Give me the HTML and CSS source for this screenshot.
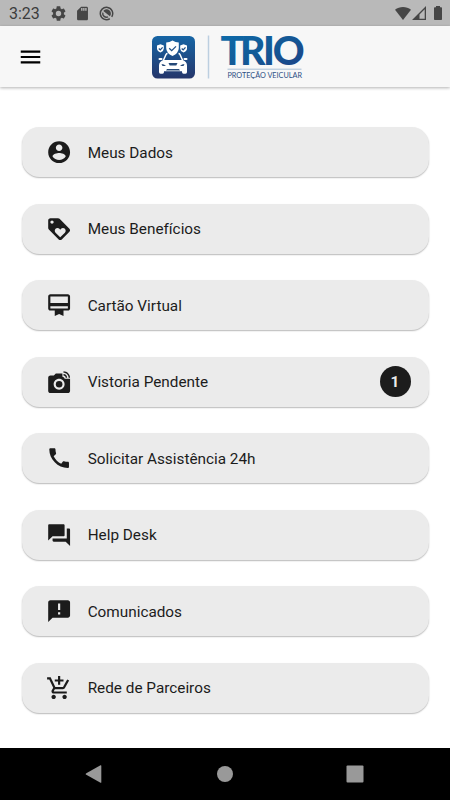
FILE: index.html
```html
<!DOCTYPE html>
<html lang="pt-BR">
<head>
  <meta charset="UTF-8" />
  <meta name="viewport" content="width=device-width, initial-scale=1.0" />
  <title>Trio Proteção Veicular</title>
  <link rel="stylesheet" href="styles.css">
</head>
<body>
  <div id="app">
    <div class="status-bar">
      <span class="clock">3:23</span>
      <svg class="status-icon gear" viewBox="2 2 20 20"><path d="M19.14 12.94c.04-.3.06-.61.06-.94 0-.32-.02-.64-.07-.94l2.03-1.58a.49.49 0 0 0 .12-.61l-1.92-3.32a.488.488 0 0 0-.59-.22l-2.39.96c-.5-.38-1.03-.7-1.62-.94l-.36-2.54a.484.484 0 0 0-.48-.41h-3.84c-.24 0-.43.17-.47.41l-.36 2.54c-.59.24-1.13.57-1.62.94l-2.39-.96c-.22-.08-.47 0-.59.22L2.74 8.87c-.12.21-.08.47.12.61l2.03 1.58c-.05.3-.09.63-.09.94s.02.64.07.94l-2.03 1.58a.49.49 0 0 0-.12.61l1.92 3.32c.12.22.37.29.59.22l2.39-.96c.5.38 1.03.7 1.62.94l.36 2.54c.05.24.24.41.48.41h3.84c.24 0 .44-.17.47-.41l.36-2.54c.59-.24 1.13-.56 1.62-.94l2.39.96c.22.08.47 0 .59-.22l1.92-3.32c.12-.22.07-.47-.12-.61l-2.01-1.58zM12 15.600A3.600 3.600 0 1 1 12 8.400a3.600 3.600 0 0 1 0 7.200z"/></svg>
      <svg class="status-icon sd" viewBox="1 1 22 22"><path d="M18 2h-8L4.020 8 4 20c0 1.100.9 2 2 2h12c1.100 0 2-.9 2-2V4c0-1.100-.9-2-2-2zm-6 6h-2V4h2v4zm3 0h-2V4h2v4zm3 0h-2V4h2v4z"/></svg>
      <svg class="status-icon sync" viewBox="0 0 16 16">
        <path d="M11.500 13.600A6.600 6.600 0 1 1 13.600 11.500" fill="none" stroke="#464646" stroke-width="1.600"/>
        <path d="M4.600 5.200A4.400 4.400 0 0 1 11.700 10.900z"/>
        <path d="M4.100 7a4 4 0 0 0 5.600 4.600" fill="none" stroke="#464646" stroke-width="1.500"/>
      </svg>
      <div class="status-right">
        <svg class="wifi" viewBox="0 0 16 13"><path d="M0 2.800C4.500-.9 11.500-.9 16 2.800L8 13z"/></svg>
        <svg class="signal" viewBox="0 0 14 14"><path d="M14 0v14H0zM12.700 3.200L7.500 8.400v4.400h5.200z" fill-rule="evenodd"/></svg>
        <svg class="battery" viewBox="0 0 8 14"><path d="M2 0h4v1.300h1.200q.8 0 .8.800v11.100q0 .8-.8.800H.8q-.8 0-.8-.8V2.100q0-.8.800-.8H2z"/></svg>
      </div>
    </div>

    <header class="toolbar">
      <button class="menu-button" aria-label="Menu">
        <svg viewBox="0 0 24 24"><path d="M3 18h18v-2H3v2zm0-5h18v-2H3v2zm0-7v2h18V6H3z"/></svg>
      </button>
      <svg class="logo" viewBox="0 0 156 48">
        <defs>
          <linearGradient id="badgeFill" x1="0" y1="0" x2="0" y2="1">
            <stop offset="0" stop-color="#1665a5"/>
            <stop offset="1" stop-color="#25366b"/>
          </linearGradient>
          <linearGradient id="wordFill" x1="0" y1="0" x2="1" y2="1">
            <stop offset="0" stop-color="#0b6fae"/>
            <stop offset=".5" stop-color="#135a97"/>
            <stop offset="1" stop-color="#1d4085"/>
          </linearGradient>
        </defs>
        <rect x="2" y="3" width="43" height="42.500" rx="5.500" fill="url(#badgeFill)"/>
        <!-- car and shields -->
        <g fill="#fff">
          <path d="M7 12.500l3.500-1.200 3.300 1.200v3.300q0 2.300-3.300 3.800Q7 18.100 7 15.800z"/>
          <path d="M30.200 12.500l3.300-1.200 3.500 1.200v3.300q0 2.300-3.500 3.800-3.300-1.500-3.300-3.800z"/>
          <path d="M22.500 7.500q3 2 6.300 2v5.500q0 5-6.300 8-6.300-3-6.300-8V9.500q3.300 0 6.300-2z"/>
          <path d="M13.300 27h19.400q4.300 1.800 4.300 5.500V39q0 1.700-1.500 1.700h-2q-1.500 0-1.500-1.700v-.8H14v.8q0 1.700-1.500 1.700h-2Q9 40.700 9 39v-6.500q0-3.700 4.300-5.500z"/>
          <rect x="8.500" y="25" width="4" height="2" rx="1"/>
          <rect x="33.500" y="25" width="4" height="2" rx="1"/>
        </g>
        <path d="M13.300 27.500l2.700-6q.5-1 1.500-1M32.700 27.500l-2.700-6q-.5-1-1.500-1" fill="none" stroke="#fff" stroke-width="1.500"/>
        <path d="M19.200 15.200l2.500 2.500 4.300-4.300M8.800 15.500l1.500 1.400 2.300-2.500M31.700 15.500l1.500 1.400 2.300-2.500" fill="none" stroke="#205086" stroke-width="1.300"/>
        <path d="M11.500 31q2.700 0 4.500 2h-3.500zM34.500 31q-2.700 0-4.500 2h3.500zM18.500 30h9l-1.200 2.500h-6.600zM17 36h12l1 1.500H16z" fill="#244878"/>
        <path d="M58.500 2.500v43" stroke="#bccfe0" stroke-width="1.500"/>
        <text class="logo-name" x="70.500 90 113 122.800" y="31.800" fill="url(#wordFill)">TRIO</text>
        <path d="M77.500 36.200h74" stroke="#a9bfd5" stroke-width="1"/>
        <text class="logo-tagline" x="77.500" y="44.500" textLength="74.500" lengthAdjust="spacingAndGlyphs">PROTEÇÃO VEICULAR</text>
      </svg>
    </header>

    <main class="menu">
      <a class="menu-item">
        <svg viewBox="0 0 24 24"><path d="M12 2C6.480 2 2 6.480 2 12s4.480 10 10 10 10-4.480 10-10S17.520 2 12 2zm0 3c1.660 0 3 1.340 3 3s-1.340 3-3 3-3-1.340-3-3 1.340-3 3-3zm0 14.200c-2.500 0-4.710-1.280-6-3.220.03-1.990 4-3.080 6-3.080 1.990 0 5.970 1.090 6 3.080-1.290 1.940-3.500 3.220-6 3.220z"/></svg>
        <span>Meus Dados</span>
      </a>
      <a class="menu-item">
        <svg viewBox="0 0 24 24"><path d="M21.410 11.580l-9-9C12.050 2.220 11.550 2 11 2H4c-1.100 0-2 .9-2 2v7c0 .55.22 1.050.59 1.420l9 9c.36.36.86.58 1.410.58s1.050-.22 1.410-.59l7-7c.37-.36.59-.86.59-1.410s-.23-1.060-.59-1.420zM5.500 7C4.670 7 4 6.330 4 5.500S4.670 4 5.500 4 7 4.670 7 5.500 6.330 7 5.500 7zm11.770 8.270L13 19.540l-4.270-4.270C8.280 14.810 8 14.190 8 13.500c0-1.380 1.120-2.500 2.500-2.500.69 0 1.320.28 1.770.74l.73.72.73-.73c.45-.45 1.080-.73 1.770-.73 1.380 0 2.500 1.120 2.500 2.500 0 .69-.28 1.320-.73 1.770z"/></svg>
        <span>Meus Benefícios</span>
      </a>
      <a class="menu-item">
        <svg viewBox="0 0 24 24"><path d="M20 2H4c-1.110 0-2 .89-2 2v11c0 1.110.89 2 2 2h4v5l4-2 4 2v-5h4c1.110 0 2-.89 2-2V4c0-1.110-.89-2-2-2zm0 13H4v-2h16v2zm0-5H4V4h16v6z"/></svg>
        <span>Cartão Virtual</span>
      </a>
      <a class="menu-item">
        <svg viewBox="0 0 24 24">
          <circle cx="12" cy="14" r="3"/>
          <path d="M16 3.330c2.580 0 4.670 2.090 4.670 4.670H22c0-3.310-2.690-6-6-6v1.330M16 6c1.110 0 2 .89 2 2h1.330c0-1.840-1.490-3.330-3.330-3.330V6"/>
          <path d="M17 9c0-1.110-.89-2-2-2V4H9L7.170 6H4c-1.100 0-2 .9-2 2v12c0 1.100.9 2 2 2h16c1.100 0 2-.9 2-2V9h-5zm-5 10c-2.760 0-5-2.240-5-5s2.240-5 5-5 5 2.240 5 5-2.240 5-5 5z"/>
        </svg>
        <span>Vistoria Pendente</span>
        <b class="badge">1</b>
      </a>
      <a class="menu-item">
        <svg viewBox="0 0 24 24"><path d="M20.010 15.380c-1.230 0-2.420-.2-3.530-.56-.35-.12-.74-.03-1.010.24l-1.570 1.970c-2.830-1.350-5.480-3.900-6.890-6.830l1.950-1.660c.27-.28.35-.67.24-1.020-.37-1.110-.56-2.300-.56-3.530 0-.54-.45-.99-.99-.99H4.190C3.650 3 3 3.240 3 3.990 3 13.280 10.730 21 20.010 21c.71 0 .99-.63.99-1.180v-3.450c0-.54-.45-.99-.99-.99z"/></svg>
        <span>Solicitar Assistência 24h</span>
      </a>
      <a class="menu-item">
        <svg viewBox="0 0 24 24"><path d="M21 6h-2v9H6v2c0 .55.45 1 1 1h11l4 4V7c0-.55-.45-1-1-1zm-4 6V3c0-.55-.45-1-1-1H3c-.55 0-1 .45-1 1v14l4-4h10c.55 0 1-.45 1-1z"/></svg>
        <span>Help Desk</span>
      </a>
      <a class="menu-item">
        <svg viewBox="0 0 24 24"><path d="M20 2H4c-1.100 0-1.990.9-1.990 2L2 22l4-4h14c1.100 0 2-.9 2-2V4c0-1.100-.9-2-2-2zm-7 9h-2V5h2v6zm0 4h-2v-2h2v2z"/></svg>
        <span>Comunicados</span>
      </a>
      <a class="menu-item">
        <svg viewBox="0 0 24 24"><path d="M11 9h2V6h3V4h-3V1h-2v3H8v2h3v3zm-4 9c-1.100 0-1.990.9-1.990 2S5.900 22 7 22s2-.9 2-2-.9-2-2-2zm10 0c-1.100 0-1.990.9-1.990 2s.89 2 1.990 2 2-.9 2-2-.9-2-2-2zm-9.830-3.250l.03-.12.9-1.630h7.450c.75 0 1.410-.41 1.750-1.030l3.860-7.010L19.420 4h-.01l-1.100 2-2.760 5H8.530l-.13-.27L6.160 6l-.95-2-.94-2H1v2h2l3.600 7.590-1.350 2.450c-.16.28-.25.61-.25.96 0 1.100.9 2 2 2h12v-2H7.420c-.13 0-.25-.11-.25-.25z"/></svg>
        <span>Rede de Parceiros</span>
      </a>
    </main>

    <nav class="nav-bar">
      <svg viewBox="0 0 18 18"><path d="M1.300 8.200L15.500.300q.8-.4.800.5v16.400q0 .9-.8.500L1.300 9.800q-1.300-.8 0-1.600z"/></svg>
      <svg viewBox="0 0 18 18"><circle cx="9" cy="9" r="8"/></svg>
      <svg viewBox="0 0 18 18"><rect x=".5" y=".5" width="17" height="17" rx="1"/></svg>
    </nav>
  </div>
</body>
</html>
```
FILE: styles.css
```css
* {
  box-sizing: border-box;
}
body {
  margin: 0;
  font-family: Roboto, sans-serif;
  background: #fff;
  color: #1c1c1c;
}
svg {
  display: block;
  flex: none;
}
#app {
  display: flex;
  flex-direction: column;
  height: 800px;
  overflow: hidden;
}
.status-bar {
  display: flex;
  align-items: center;
  height: 26px;
  padding: 0 8px 0 9px;
  background: #b9b9b9;
  fill: #464646;
}
.clock {
  width: 42px;
  font-size: 16px;
  line-height: 26px;
  padding-top: 2px;
  color: #3c3c3c;
}
.status-icon {
  width: 15px;
  height: 15px;
}
.sd {
  margin-left: 9px;
}
.sync {
  margin-left: 9px;
}
.status-right {
  display: flex;
  align-items: center;
  margin-left: auto;
}
.wifi {
  width: 16px;
  height: 13px;
}
.signal {
  width: 14px;
  height: 14px;
  margin: 0 8px 0 1px;
}
.battery {
  width: 8px;
  height: 14px;
}
.toolbar {
  display: flex;
  align-items: center;
  height: 61px;
  padding-left: 17px;
  background: #f7f7f7;
  box-shadow: 0 1px 3px rgba(0, 0, 0, 0.3);
}
.menu-button {
  padding: 0;
  border: none;
  background: none;
}
.menu-button svg {
  width: 27px;
  height: 26px;
}
.logo {
  width: 156px;
  height: 48px;
  margin-left: 106px;
  overflow: visible;
}
.logo-name {
  font: 900 39.300px Lato, sans-serif;
}
.logo-tagline {
  font: 400 6.600px Lato, sans-serif;
  fill: #2d4f85;
}
.menu {
  flex: 1;
  display: flex;
  flex-direction: column;
  gap: 26.360px;
  padding: 40px 21.500px 0;
}
.menu-item {
  display: flex;
  align-items: center;
  flex: none;
  height: 50.200px;
  padding: 0 18px 0 24.400px;
  border-radius: 17.500px;
  background: #ebebeb;
  box-shadow: 0 1px 1.500px rgba(0, 0, 0, 0.28);
}
.menu-item svg {
  width: 26.250px;
  height: 26.250px;
  fill: #1c1c1c;
}
.menu-item span {
  margin-left: 15.500px;
  padding-top: 1px;
  font-size: 15.320px;
}
.badge {
  width: 31px;
  height: 31px;
  margin-left: auto;
  border-radius: 50%;
  background: #1c1c1c;
  color: #ebebeb;
  font-size: 15.300px;
  line-height: 32px;
  text-align: center;
}
.nav-bar {
  display: flex;
  align-items: center;
  justify-content: space-between;
  height: 52px;
  padding: 0 86px 0 85px;
  background: #000;
  fill: #999;
}
.nav-bar svg {
  width: 18px;
  height: 18px;
}
```
